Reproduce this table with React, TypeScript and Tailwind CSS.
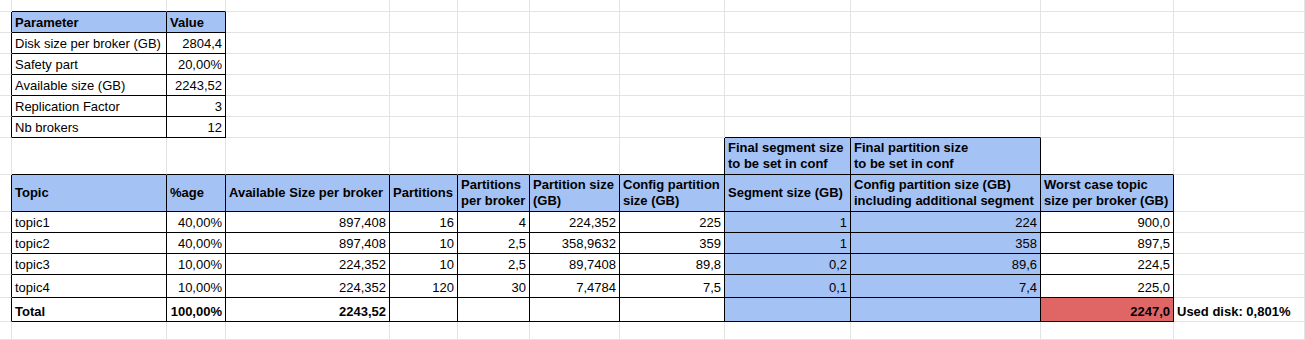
import React from 'react';

type Cell = { t?: string; r?: boolean; bg?: 'blue' | 'red' };

const E: Cell = {};

const blank = (n: number): Cell[] => Array.from({ length: n }, () => E);

const rows: Cell[][] = [
  blank(12),
  [E, { t: 'Parameter', bg: 'blue' }, { t: 'Value', bg: 'blue' }, ...blank(9)],
  [E, { t: 'Disk size per broker (GB)' }, { t: '2804,4', r: true }, ...blank(9)],
  [E, { t: 'Safety part' }, { t: '20,00%', r: true }, ...blank(9)],
  [E, { t: 'Available size (GB)' }, { t: '2243,52', r: true }, ...blank(9)],
  [E, { t: 'Replication Factor' }, { t: '3', r: true }, ...blank(9)],
  [E, { t: 'Nb brokers' }, { t: '12', r: true }, ...blank(9)],
  [
    ...blank(8),
    { t: 'Final segment size\nto be set in conf', bg: 'blue' },
    { t: 'Final partition size\nto be set in conf', bg: 'blue' },
    E,
    E,
  ],
  [
    E,
    { t: 'Topic', bg: 'blue' },
    { t: '%age', bg: 'blue' },
    { t: 'Available Size per broker', bg: 'blue' },
    { t: 'Partitions', bg: 'blue' },
    { t: 'Partitions\nper broker', bg: 'blue' },
    { t: 'Partition size\n(GB)', bg: 'blue' },
    { t: 'Config partition\nsize (GB)', bg: 'blue' },
    { t: 'Segment size (GB)', bg: 'blue' },
    { t: 'Config partition size (GB)\nincluding additional segment', bg: 'blue' },
    { t: 'Worst case topic\nsize per broker (GB)', bg: 'blue' },
    E,
  ],
  ...[
    ['topic1', '40,00%', '897,408', '16', '4', '224,352', '225', '1', '224', '900,0'],
    ['topic2', '40,00%', '897,408', '10', '2,5', '358,9632', '359', '1', '358', '897,5'],
    ['topic3', '10,00%', '224,352', '10', '2,5', '89,7408', '89,8', '0,2', '89,6', '224,5'],
    ['topic4', '10,00%', '224,352', '120', '30', '7,4784', '7,5', '0,1', '7,4', '225,0'],
  ].map((vals): Cell[] => [
    E,
    ...vals.map((t, i): Cell => ({
      t,
      r: i > 0,
      bg: i === 7 || i === 8 ? 'blue' : undefined,
    })),
    E,
  ]),
  [
    E,
    { t: 'Total' },
    { t: '100,00%', r: true },
    { t: '2243,52', r: true },
    E,
    E,
    E,
    E,
    { bg: 'blue' },
    { bg: 'blue' },
    { t: '2247,0', r: true, bg: 'red' },
    { t: 'Used disk: 0,801%' },
  ],
  blank(12),
];

const inTable = (r: number, c: number) => {
  if (r >= 1 && r <= 6) return c === 1 || c === 2;
  if (r === 7) return c === 8 || c === 9;
  if (r >= 8 && r <= 13) return c >= 1 && c <= 10;
  return false;
};

const boldRows = [1, 7, 8, 13];
const headerRows = [7, 8];

export default function App() {
  return (
    <div className="w-[1305px] h-[340px] overflow-hidden bg-white text-black font-['Liberation_Sans',Arial,sans-serif] text-[13px]">
      <div className="grid grid-cols-[12px_155px_59px_164px_68px_72px_90px_105px_126px_190px_133px_131px] grid-rows-[12px_21px_21px_21px_21px_21px_21px_37px_37px_21px_21px_21px_23px_24px_18px]">
        {rows.map((row, r) =>
          row.map((cell, c) => {
            const rightBlack = inTable(r, c) || inTable(r, c + 1);
            const bottomBlack = inTable(r, c) || inTable(r + 1, c);
            const header = headerRows.includes(r);
            return (
              <div
                key={`${r}-${c}`}
                className={[
                  'flex min-w-0 border-r border-b px-[3px] whitespace-pre',
                  rightBlack ? 'border-r-black' : 'border-r-[#e2e3e3]',
                  bottomBlack ? 'border-b-black' : 'border-b-[#e2e3e3]',
                  cell.bg === 'blue' ? 'bg-[#a4c2f4]' : cell.bg === 'red' ? 'bg-[#e06666]' : '',
                  header ? 'items-center leading-[16px]' : 'items-end pb-[2px] leading-[15px]',
                  cell.r ? 'justify-end text-right' : 'justify-start',
                  boldRows.includes(r) ? 'font-bold' : '',
                ].join(' ')}
              >
                {cell.t && <span>{cell.t}</span>}
              </div>
            );
          })
        )}
      </div>
    </div>
  );
}
